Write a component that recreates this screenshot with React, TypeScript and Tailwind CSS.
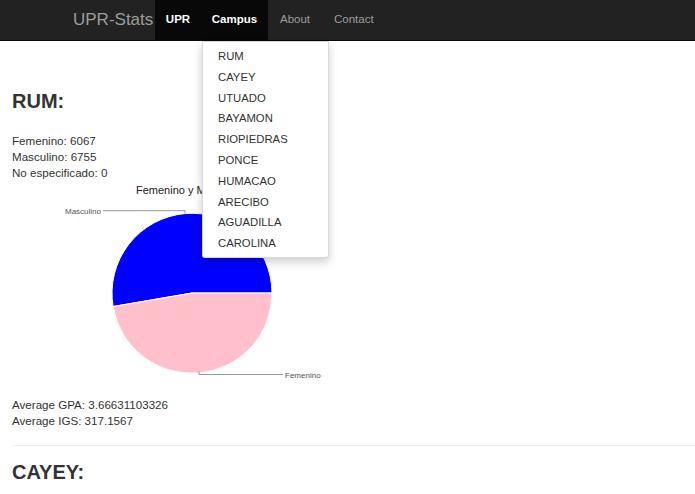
import React from 'react';

const campuses = [
  'RUM',
  'CAYEY',
  'UTUADO',
  'BAYAMON',
  'RIOPIEDRAS',
  'PONCE',
  'HUMACAO',
  'ARECIBO',
  'AGUADILLA',
  'CAROLINA',
];

const GenderPie: React.FC = () => {
  return (
    <svg width="340" height="216" viewBox="0 0 340 216" className="block">
      <text
        x="124"
        y="13"
        fontSize="11"
        fill="#222"
        fontFamily="'Liberation Sans', Arial, sans-serif"
      >
        Femenino y Masculino
      </text>
      {/* Masculino slice */}
      <path d="M180,112 L260,112 A80,80 0 1 0 101.1,125.5 Z" fill="#0000ff" stroke="#ffffff" strokeWidth="1" />
      {/* Femenino slice */}
      <path d="M180,112 L101.1,125.5 A80,80 0 0 0 260,112 Z" fill="#ffc0cb" stroke="#ffffff" strokeWidth="1" />
      {/* labels */}
      <path d="M91,29.7 L173,29.7 L173,32.5" fill="none" stroke="#999" strokeWidth="1" />
      <text
        x="89"
        y="32.5"
        textAnchor="end"
        fontSize="8"
        fill="#555"
        fontFamily="'Liberation Sans', Arial, sans-serif"
      >
        Masculino
      </text>
      <path d="M187,190.5 L187,193.5 L271,193.5" fill="none" stroke="#999" strokeWidth="1" />
      <text
        x="273"
        y="196.5"
        fontSize="8"
        fill="#555"
        fontFamily="'Liberation Sans', Arial, sans-serif"
      >
        Femenino
      </text>
    </svg>
  );
};

const App: React.FC = () => {
  return (
    <div className="min-h-[494px] bg-white text-[#333] font-['Liberation_Sans',Arial,sans-serif]">
      {/* Navbar */}
      <nav className="h-[41px] bg-[#222222] border-b border-[#080808] flex items-stretch">
        <div className="w-[155px] pl-[73px] flex items-center text-[17px] text-[#9d9d9d]">
          UPR-Stats
        </div>
        <ul className="flex items-stretch text-[11.5px]">
          <li className="w-[46px] bg-[#080808] flex items-center justify-center font-bold text-white">
            UPR
          </li>
          <li className="relative w-[67px] bg-[#080808] flex items-center justify-center font-bold text-white">
            Campus
            <div className="absolute left-[1px] top-[41px] z-10 w-[127px] bg-white border border-[rgba(0,0,0,0.15)] rounded-b-[3px] shadow-[0_4px_10px_rgba(0,0,0,0.2)] pt-[4px] pb-[3px]">
              {campuses.map((c) => (
                <div
                  key={c}
                  className="h-[20.8px] pl-[15px] flex items-center text-[11.3px] font-normal text-[#333]"
                >
                  {c}
                </div>
              ))}
            </div>
          </li>
          <li className="w-[55px] pl-[12px] flex items-center text-[#9d9d9d]">About</li>
          <li className="pl-[11px] flex items-center text-[#9d9d9d]">Contact</li>
        </ul>
      </nav>

      {/* Content */}
      <div className="pl-[12px]">
        <h2 className="mt-[49px] text-[20px] leading-[22px] font-bold">RUM:</h2>
        <div className="mt-[21px] text-[11.6px] leading-[16px]">
          <div>Femenino: 6067</div>
          <div>Masculino: 6755</div>
          <div>No especificado: 0</div>
        </div>
        <GenderPie />
        <div className="text-[11.6px] leading-[16px]">
          <div>Average GPA: 3.66631103326</div>
          <div>Average IGS: 317.1567</div>
        </div>
        <hr className="mt-[16px] border-t border-[#eeeeee]" />
        <h2 className="mt-[15px] text-[20px] leading-[22px] font-bold">CAYEY:</h2>
      </div>
    </div>
  );
};

export default App;
